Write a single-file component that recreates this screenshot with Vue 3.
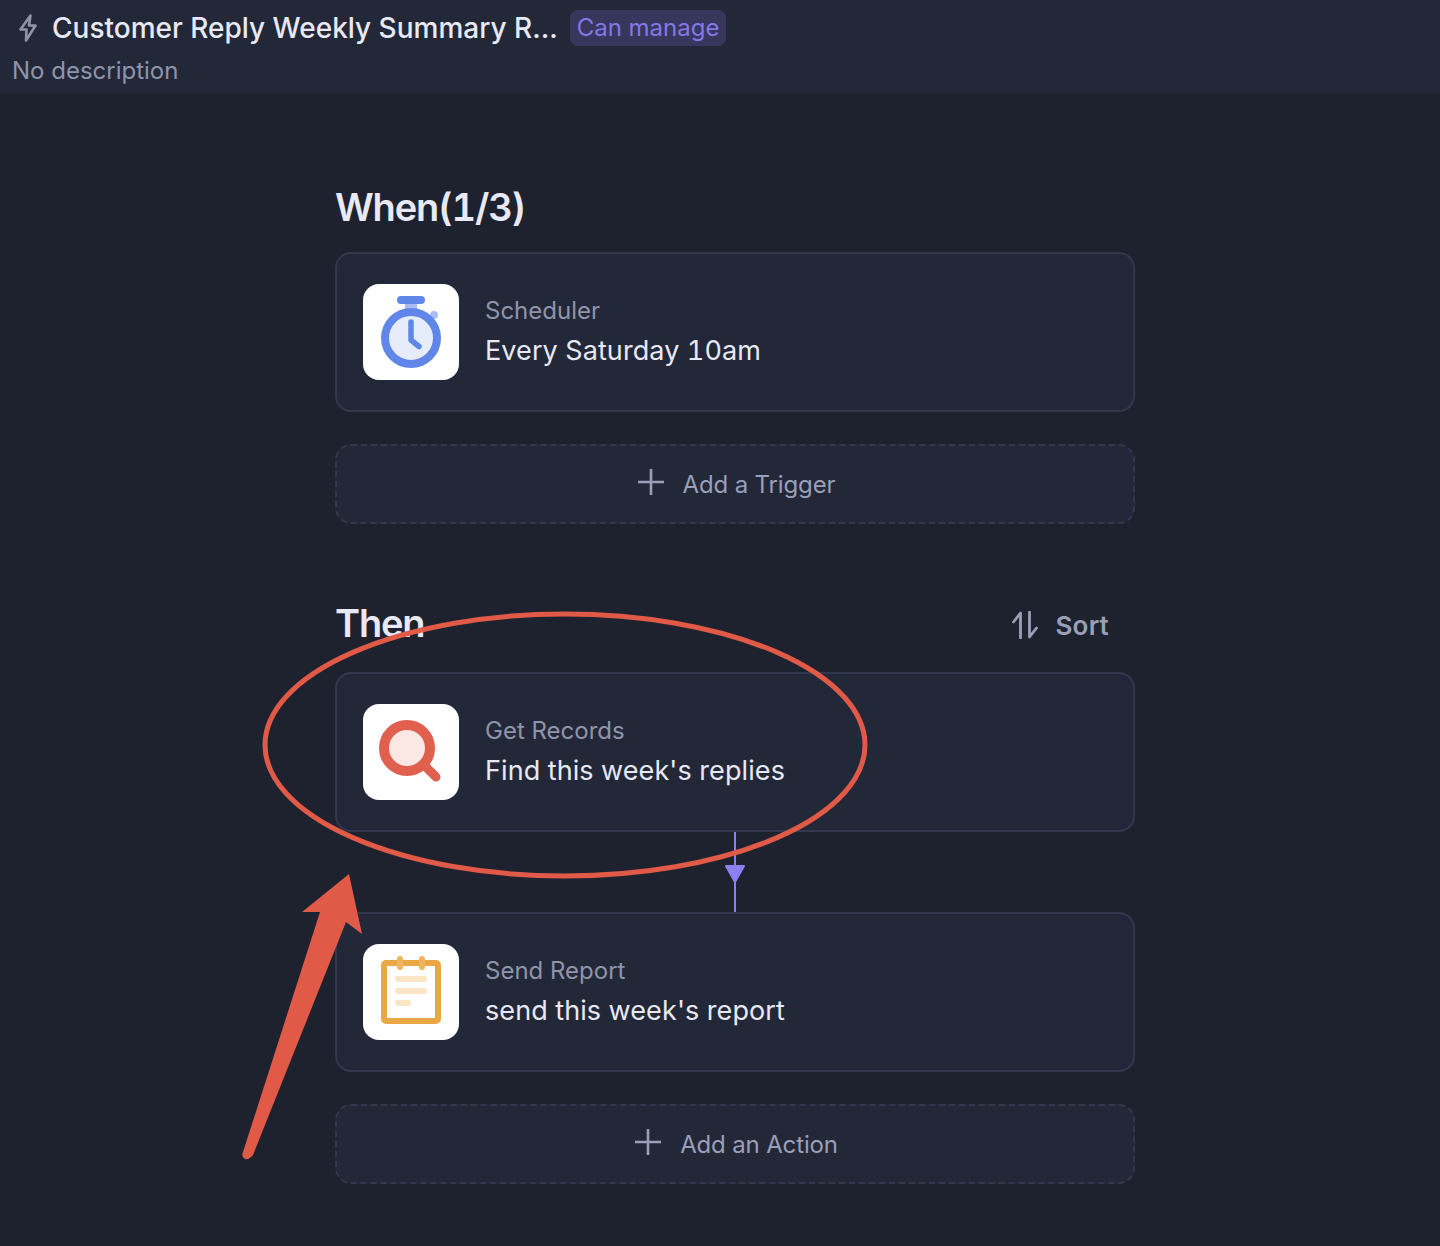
<template>
  <div class="page">
    <header class="top">
      <div class="title-row">
        <svg class="bolt" width="20" height="28" viewBox="0 0 20 28" fill="none">
          <path d="M12.500 1.500 2.500 15.500h6L8 26.500l9.500-15h-6.500z" stroke="#8f94ab" stroke-width="2.600" stroke-linejoin="round" />
        </svg>
        <span class="title">Customer Reply Weekly Summary R...</span>
        <span class="badge">Can manage</span>
      </div>
      <div class="desc">No description</div>
    </header>

    <main class="content">
      <h2 class="section-title">When(1/3)</h2>
      <div class="card">
        <div class="icon-box">
          <svg width="96" height="96" viewBox="0 0 96 96">
            <rect x="42" y="18" width="12" height="10" fill="#a9bcf3" />
            <rect x="34" y="12" width="28" height="8" rx="4" fill="#5f86e8" />
            <circle cx="71" cy="31" r="4" fill="#a9bcf3" />
            <circle cx="48" cy="54" r="26" fill="#e7ecfb" stroke="#5f86e8" stroke-width="8" />
            <path d="M48 38v18l8 6.500" fill="none" stroke="#5f86e8" stroke-width="5.500" stroke-linecap="round" stroke-linejoin="round" />
          </svg>
        </div>
        <div class="card-text">
          <div class="card-label">Scheduler</div>
          <div class="card-value">Every Saturday 10am</div>
        </div>
      </div>
      <div class="add-btn add-trigger">
        <svg class="plus" width="26" height="26" viewBox="0 0 26 26"><path d="M13 0v26M0 13h26" stroke="#9a9fb8" stroke-width="2.600" /></svg>
        <span>Add a Trigger</span>
      </div>

      <div class="then-head">
        <h2 class="section-title">Then</h2>
        <div class="sort">
          <svg width="28" height="28" viewBox="0 0 28 28" fill="none">
            <path d="M2.500 11 9.500 2v25M18.500 1v25l7-9" stroke="#9a9fb8" stroke-width="2.800" stroke-linecap="round" stroke-linejoin="round" />
          </svg>
          <span>Sort</span>
        </div>
      </div>
      <div class="card">
        <div class="icon-box">
          <svg width="96" height="96" viewBox="0 0 96 96">
            <circle cx="44" cy="44" r="23" fill="#fbe8e5" stroke="#e05f4e" stroke-width="10" />
            <path d="M62 62l11 11" stroke="#e05f4e" stroke-width="9" stroke-linecap="round" />
          </svg>
        </div>
        <div class="card-text">
          <div class="card-label">Get Records</div>
          <div class="card-value">Find this week's replies</div>
        </div>
      </div>
      <div class="connector">
        <svg class="arrow-down" width="22" height="20" viewBox="0 0 22 20"><path d="M2 2h18L11 18z" fill="#8c7ff0" stroke="#8c7ff0" stroke-width="2" stroke-linejoin="round" /></svg>
      </div>
      <div class="card">
        <div class="icon-box">
          <svg width="96" height="96" viewBox="0 0 96 96">
            <rect x="21" y="19" width="54" height="58" rx="2" fill="#fff" stroke="#eaa746" stroke-width="6" />
            <rect x="34" y="12" width="6" height="14" rx="3" fill="#f0b45c" />
            <rect x="56" y="12" width="6" height="14" rx="3" fill="#f0b45c" />
            <rect x="32" y="32" width="32" height="6" rx="3" fill="#fbe5c4" />
            <rect x="32" y="44" width="32" height="6" rx="3" fill="#fbe5c4" />
            <rect x="32" y="56" width="16" height="6" rx="3" fill="#fbe5c4" />
          </svg>
        </div>
        <div class="card-text">
          <div class="card-label">Send Report</div>
          <div class="card-value">send this week's report</div>
        </div>
      </div>
      <div class="add-btn add-action">
        <svg class="plus" width="26" height="26" viewBox="0 0 26 26"><path d="M13 0v26M0 13h26" stroke="#9a9fb8" stroke-width="2.600" /></svg>
        <span>Add an Action</span>
      </div>
    </main>

    <!-- hand drawn annotation on top of the screenshot -->
    <svg class="annotation" width="1440" height="1246" viewBox="0 0 1440 1246" fill="none">
      <ellipse cx="565" cy="745" rx="300" ry="131" stroke="#e05a47" stroke-width="5" />
      <path d="M349 874 362 934 346 922 253 1155Q249 1160 245 1159Q241 1157 243 1152L320 912 302 912z" fill="#e05a47" />
    </svg>
  </div>
</template>

<script setup>
</script>

<style>
html, body {
  margin: 0;
  background: #1e212e;
}
</style>

<style scoped>
.page {
  position: relative;
  width: 1440px;
  height: 1246px;
  overflow: hidden;
  background: #1e212e;
  font-family: Inter, "Liberation Sans", sans-serif;
}

.top {
  height: 94px;
  box-sizing: border-box;
  padding: 10px 0 0 12px;
  background: #232838;
}

.title-row {
  display: flex;
  align-items: center;
  height: 36px;
}

.bolt {
  margin: 0 14px 0 6px;
}

.title {
  font-size: 28px;
  font-weight: 500;
  line-height: 36px;
  color: #e8e9f5;
  letter-spacing: 0;
}

.badge {
  margin-left: 12px;
  padding: 0 7px;
  height: 36px;
  line-height: 35px;
  font-size: 24px;
  color: #8478e6;
  background: #37365c;
  border-radius: 8px;
}

.desc {
  margin-top: 9px;
  font-size: 24px;
  line-height: 32px;
  color: #8f94ab;
}

.content {
  width: 800px;
  margin-left: 335px;
  padding-top: 88px;
}

.section-title {
  margin: 0;
  font-size: 38px;
  font-weight: 600;
  line-height: 50px;
  letter-spacing: -1.2px;
  font-feature-settings: "tnum";
  color: #e8e9f5;
}

.card {
  display: flex;
  align-items: center;
  gap: 26px;
  height: 160px;
  box-sizing: border-box;
  margin-top: 20px;
  padding-left: 26px;
  background: #232838;
  border: 2px solid #33384f;
  border-radius: 16px;
}

.icon-box {
  width: 96px;
  height: 96px;
  flex-shrink: 0;
  background: #fff;
  border-radius: 16px;
}

.icon-box svg {
  display: block;
}

.card-label {
  font-size: 24px;
  line-height: 32px;
  color: #8f94ab;
}

.card-value {
  margin-top: 6px;
  font-size: 27px;
  line-height: 36px;
  letter-spacing: 0.1px;
  font-feature-settings: "tnum";
  color: #e8e9f5;
}

.add-btn {
  display: flex;
  align-items: center;
  justify-content: center;
  gap: 19px;
  height: 80px;
  box-sizing: border-box;
  margin-top: 32px;
  padding-left: 3px;
  background: #232838;
  border: 2px dashed #33384f;
  border-radius: 16px;
  font-size: 24px;
  letter-spacing: -0.15px;
  color: #9a9fb8;
}

.plus {
  margin-top: -4px;
}

.then-head {
  display: flex;
  align-items: center;
  justify-content: space-between;
  margin-top: 74px;
  margin-bottom: 24px;
}

.sort {
  display: flex;
  align-items: center;
  gap: 16px;
  margin-top: 4px;
  padding-right: 26px;
  font-size: 26px;
  font-weight: 600;
  letter-spacing: 0.2px;
  color: #9a9fb8;
}

.connector {
  position: relative;
  width: 2px;
  height: 80px;
  margin: 0 auto;
  background: #8c7ff0;
}

.connector + .card {
  margin-top: 0;
}

.arrow-down {
  position: absolute;
  left: -10px;
  top: 32px;
}

.annotation {
  position: absolute;
  left: 0;
  top: 0;
  pointer-events: none;
}
</style>
